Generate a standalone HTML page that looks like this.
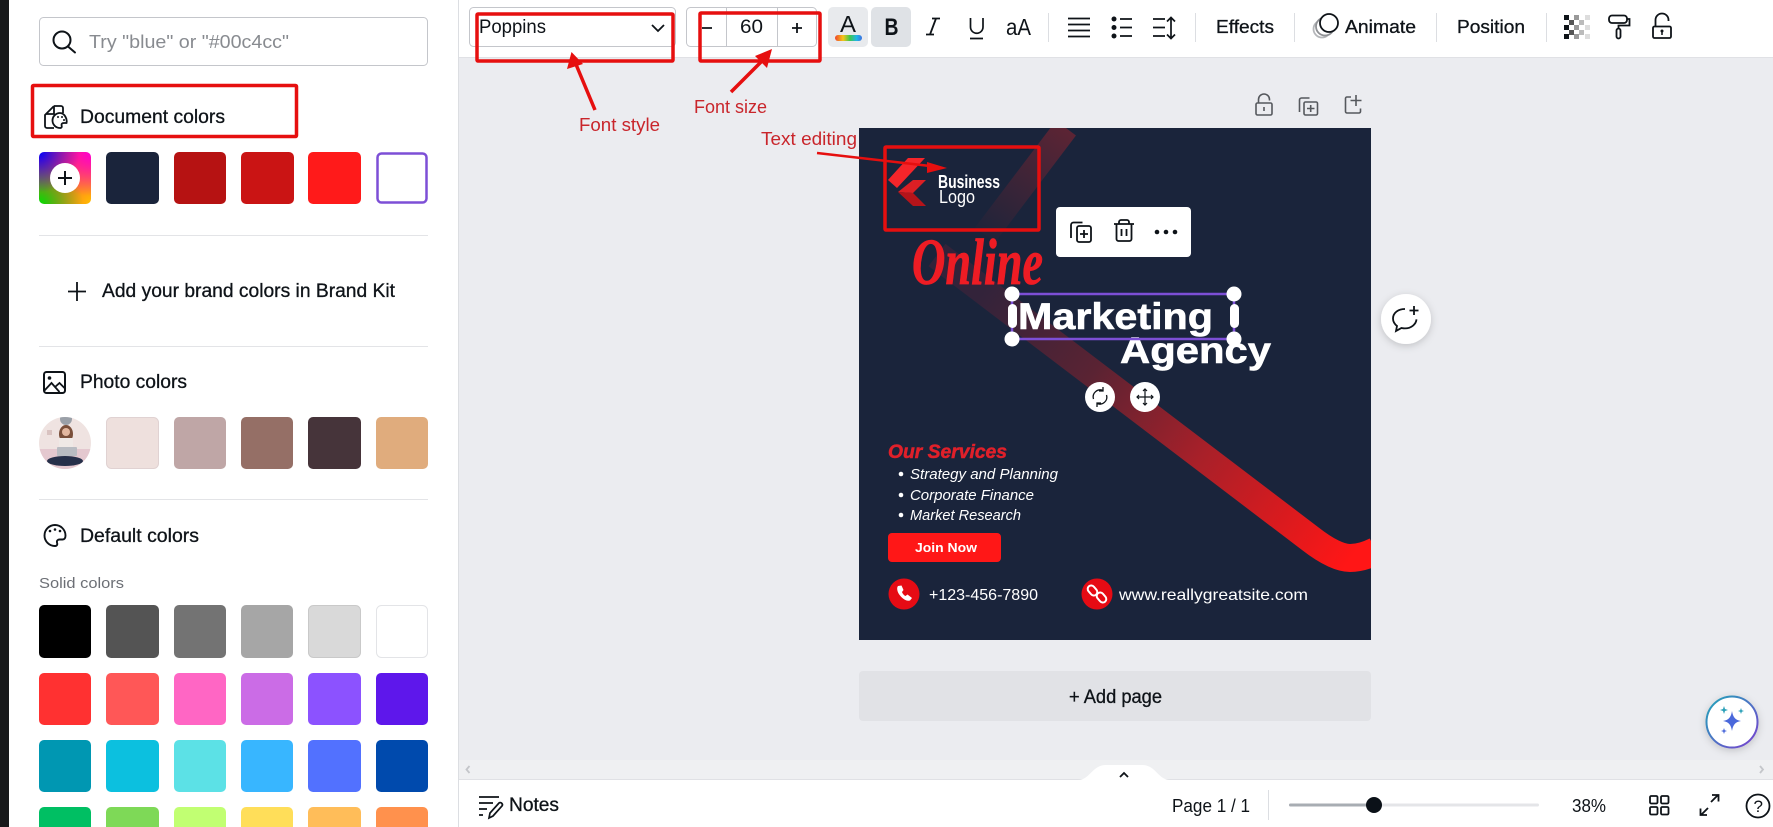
<!DOCTYPE html>
<html lang="en"><head><meta charset="utf-8"><title>Color panel editor</title>
<style>
html,body{margin:0;padding:0;width:1773px;height:827px;overflow:hidden;background:#fff}
svg{display:block;position:absolute;left:0;top:0}
text{font-family:"Liberation Sans",sans-serif;fill:#0e1318}
.m{stroke:#0e1318;stroke-width:.3px}
#rb{position:absolute;left:39px;top:152px;width:52px;height:52px;border-radius:5px;background:radial-gradient(circle at 0 0,#0000ff 0,transparent 55%),radial-gradient(circle at 100% 0,#ff00d0 0,transparent 60%),radial-gradient(circle at 0 100%,#00e000 0,transparent 60%),radial-gradient(circle at 100% 100%,#ffc000 0,transparent 65%),#ff4040}
#rb i{position:absolute;left:11px;top:11px;width:30px;height:30px;border-radius:50%;background:#fff}
#rb b{position:absolute;background:#0e1318}
</style></head><body>
<svg width="1773" height="827" viewBox="0 0 1773 827" xmlns="http://www.w3.org/2000/svg">
<defs>
<linearGradient id="band" gradientUnits="userSpaceOnUse" x1="985" y1="290" x2="1350" y2="560"><stop offset="0" stop-color="#33233a"/><stop offset=".3" stop-color="#5a2333"/><stop offset=".6" stop-color="#a82029"/><stop offset="1" stop-color="#ff1616"/></linearGradient>
<linearGradient id="band2" gradientUnits="userSpaceOnUse" x1="1066" y1="128" x2="985" y2="235"><stop offset="0" stop-color="#5c2434"/><stop offset="1" stop-color="#1f243a"/></linearGradient>
<linearGradient id="rain" x1="0" x2="1"><stop offset="0" stop-color="#f0442c"/><stop offset=".3" stop-color="#f5c518"/><stop offset=".55" stop-color="#3fc74c"/><stop offset=".8" stop-color="#1fb6e8"/><stop offset="1" stop-color="#3c6fe0"/></linearGradient>
<linearGradient id="ring" x1="0" y1="0" x2="1" y2="1"><stop offset="0" stop-color="#1fa6b8"/><stop offset="1" stop-color="#7a3fd0"/></linearGradient>
<clipPath id="des"><rect x="859" y="128" width="512" height="512"/></clipPath>
<clipPath id="ph"><circle cx="65" cy="443" r="26"/></clipPath>
<filter id="sh" x="-40%" y="-40%" width="180%" height="180%"><feDropShadow dx="0" dy="2" stdDeviation="4" flood-color="#000" flood-opacity=".18"/></filter>
</defs>

<!-- base -->
<rect x="0" y="0" width="1773" height="827" fill="#ebecf0"/>
<rect x="0" y="0" width="9" height="827" fill="#18191b"/>
<rect x="9" y="0" width="449" height="827" fill="#fff"/>
<rect x="458" y="0" width="1" height="827" fill="#dcdee2"/>
<rect x="459" y="0" width="1314" height="57" fill="#fff"/>
<rect x="459" y="57" width="1314" height="1" fill="#e0e1e5"/>

<!-- search -->
<rect x="39.500" y="17.500" width="388" height="48" rx="4" fill="#fff" stroke="#c4c6cb"/>
<circle cx="62" cy="40" r="8.500" fill="none" stroke="#0e1318" stroke-width="2"/><path d="M68 46.500L75 52.500" stroke="#0e1318" stroke-width="2" stroke-linecap="round"/>
<text x="89" y="48" font-size="18.500" textLength="200" lengthAdjust="spacingAndGlyphs" style="fill:#888b90">Try "blue" or "#00c4cc"</text>

<!-- document colors -->
<path d="M54 106h7a2 2 0 0 1 2 2v5M54 106l-9 9v11a2 2 0 0 0 2 2h7M54 106v8h-8" fill="none" stroke="#0e1318" stroke-width="1.800"/>
<path d="M60 113a7.500 7.500 0 1 0 0 15c2 0 2-1.500 1.500-3 0-1.500 1-2 2.500-2h2.500c1-4-2-10-6.500-10z" fill="#fff" stroke="#0e1318" stroke-width="1.800"/><circle cx="58" cy="117" r="1" fill="#0e1318"/><circle cx="62" cy="117" r="1" fill="#0e1318"/><circle cx="64" cy="120" r="1" fill="#0e1318"/>
<text class="m" x="80" y="123" font-size="19" textLength="145" lengthAdjust="spacingAndGlyphs">Document colors</text>
<rect x="106" y="152" width="53" height="52" rx="5" fill="#1a243b"/>
<rect x="174" y="152" width="52" height="52" rx="5" fill="#b61212"/>
<rect x="241" y="152" width="53" height="52" rx="5" fill="#ca1414"/>
<rect x="308" y="152" width="53" height="52" rx="5" fill="#ff1a1a"/>
<rect x="377.500" y="153.500" width="49" height="49" rx="4" fill="#fff" stroke="#7d4fd6" stroke-width="2.500"/>
<rect x="39" y="235" width="389" height="1" fill="#e3e4e7"/>

<path d="M77 282v19M68 291.500h18" stroke="#0e1318" stroke-width="1.800"/>
<text class="m" x="102" y="297" font-size="19" textLength="293" lengthAdjust="spacingAndGlyphs">Add your brand colors in Brand Kit</text>
<rect x="39" y="346" width="389" height="1" fill="#e3e4e7"/>

<!-- photo colors -->
<rect x="44" y="372" width="21" height="21" rx="2.500" fill="none" stroke="#0e1318" stroke-width="2"/><circle cx="49.500" cy="378" r="1.800" fill="#0e1318"/><path d="M44 391l7.500-8 8 9M55 387l4.500-4 6 6" fill="none" stroke="#0e1318" stroke-width="1.800"/>
<text class="m" x="80" y="388" font-size="19" textLength="107" lengthAdjust="spacingAndGlyphs">Photo colors</text>
<g clip-path="url(#ph)"><rect x="39" y="417" width="52" height="52" fill="#efe3e1"/><rect x="39" y="449" width="52" height="20" fill="#e4c8cf"/><circle cx="66" cy="419" r="6" fill="#9aa0a8"/><ellipse cx="66" cy="434" rx="7" ry="9" fill="#7a4f3a"/><circle cx="66" cy="432" r="4" fill="#e3b79f"/><rect x="59" y="438" width="14" height="9" fill="#efe9e6"/><rect x="57" y="447" width="20" height="9" rx="1" fill="#b9bcc2"/><ellipse cx="65" cy="461" rx="18" ry="5" fill="#26304a"/><rect x="47" y="430" width="5" height="5" fill="#d9c3c1"/></g>
<rect x="106.500" y="417.500" width="52" height="51" rx="5" fill="#eee0dd" stroke="#e0d2d2"/>
<rect x="174" y="417" width="52" height="52" rx="5" fill="#bfa6a6"/>
<rect x="241" y="417" width="52" height="52" rx="5" fill="#956f66"/>
<rect x="308" y="417" width="53" height="52" rx="5" fill="#46343a"/>
<rect x="376" y="417" width="52" height="52" rx="5" fill="#e0ac7d"/>
<rect x="39" y="499" width="389" height="1" fill="#e3e4e7"/>

<!-- default colors -->
<path d="M55 525a10.500 10.500 0 1 0 0 21c2.500 0 2.500-2 2-3.500-.5-2 1-3 2.500-3h3c2 0 3-1.500 3-4 0-6-5-10.500-10.500-10.500z" fill="none" stroke="#0e1318" stroke-width="1.900"/><circle cx="50" cy="531" r="1.300" fill="#0e1318"/><circle cx="55" cy="529.500" r="1.300" fill="#0e1318"/><circle cx="60" cy="531" r="1.300" fill="#0e1318"/>
<text class="m" x="80" y="542" font-size="19" textLength="119" lengthAdjust="spacingAndGlyphs">Default colors</text>
<text x="39" y="588" font-size="15" textLength="85" lengthAdjust="spacingAndGlyphs" style="fill:#6c6f75">Solid colors</text>

<!-- solid swatches -->
<g>
<rect x="39" y="605" width="52" height="53" rx="5" fill="#000"/><rect x="106" y="605" width="53" height="53" rx="5" fill="#545454"/><rect x="174" y="605" width="52" height="53" rx="5" fill="#737373"/><rect x="241" y="605" width="52" height="53" rx="5" fill="#a6a6a6"/><rect x="308.500" y="605.500" width="52" height="52" rx="5" fill="#d9d9d9" stroke="#c9c9c9"/><rect x="376.500" y="605.500" width="51" height="52" rx="5" fill="#fff" stroke="#e3e4e7"/>
<rect x="39" y="673" width="52" height="52" rx="5" fill="#ff3131"/><rect x="106" y="673" width="53" height="52" rx="5" fill="#ff5757"/><rect x="174" y="673" width="52" height="52" rx="5" fill="#ff66c4"/><rect x="241" y="673" width="52" height="52" rx="5" fill="#cb6ce6"/><rect x="308" y="673" width="53" height="52" rx="5" fill="#8c52ff"/><rect x="376" y="673" width="52" height="52" rx="5" fill="#5e17eb"/>
<rect x="39" y="740" width="52" height="52" rx="5" fill="#0097b2"/><rect x="106" y="740" width="53" height="52" rx="5" fill="#0cc0df"/><rect x="174" y="740" width="52" height="52" rx="5" fill="#5ce1e6"/><rect x="241" y="740" width="52" height="52" rx="5" fill="#38b6ff"/><rect x="308" y="740" width="53" height="52" rx="5" fill="#5271ff"/><rect x="376" y="740" width="52" height="52" rx="5" fill="#004aad"/>
<rect x="39" y="807" width="52" height="52" rx="5" fill="#00bf63"/><rect x="106" y="807" width="53" height="52" rx="5" fill="#7ed957"/><rect x="174" y="807" width="52" height="52" rx="5" fill="#c1ff72"/><rect x="241" y="807" width="52" height="52" rx="5" fill="#ffde59"/><rect x="308" y="807" width="53" height="52" rx="5" fill="#ffbd59"/><rect x="376" y="807" width="52" height="52" rx="5" fill="#ff914d"/>
</g>
<rect x="32.500" y="85.500" width="264" height="51" rx="1" fill="none" stroke="#e60f0f" stroke-width="3.500"/>

<!-- toolbar -->
<rect x="469.500" y="7.500" width="206" height="39" rx="4" fill="#fff" stroke="#c4c6cb"/>
<text x="479" y="33" font-size="19" textLength="67" lengthAdjust="spacingAndGlyphs">Poppins</text>
<path d="M652 25l6 6 6-6" fill="none" stroke="#0e1318" stroke-width="1.800"/>
<rect x="686.500" y="7.500" width="130" height="39" rx="4" fill="#fff" stroke="#c4c6cb"/>
<path d="M726.500 8v38M777.500 8v38" stroke="#c4c6cb"/>
<path d="M702 28h10M792 28h10M797 23v10" stroke="#0e1318" stroke-width="1.800"/>
<text x="740" y="33" font-size="19" textLength="23" lengthAdjust="spacingAndGlyphs">60</text>

<rect x="828" y="7" width="40" height="40" rx="5" fill="#e8eaed"/>
<rect x="871" y="7" width="40" height="40" rx="5" fill="#dfe2e6"/>
<text x="840" y="32" font-size="23" textLength="16" lengthAdjust="spacingAndGlyphs">A</text>
<rect x="835" y="35" width="27" height="6" rx="3" fill="url(#rain)"/>
<text x="884.500" y="35" font-size="24" font-weight="bold" textLength="14" lengthAdjust="spacingAndGlyphs">B</text>
<path d="M932 18.500h8M926 34.500h8M936 18.500l-6 16" fill="none" stroke="#0e1318" stroke-width="1.800"/>
<path d="M970.500 18v9a6 6 0 0 0 12.500 0V18M970 38.500h13" fill="none" stroke="#0e1318" stroke-width="1.700"/>
<text x="1006" y="35" font-size="23" textLength="25" lengthAdjust="spacingAndGlyphs">aA</text>
<rect x="1048" y="13" width="1" height="29" fill="#dcdee2"/>
<path d="M1068 18.500h22M1068 24.500h22M1068 30.500h22M1068 36.500h22" stroke="#0e1318" stroke-width="1.800"/>
<circle cx="1114" cy="19" r="2.500" fill="#0e1318"/><circle cx="1114" cy="27.500" r="2.500" fill="#0e1318"/><circle cx="1114" cy="36" r="2.500" fill="#0e1318"/>
<path d="M1120 19h12M1120 27.500h12M1120 36h12" stroke="#0e1318" stroke-width="1.800"/>
<path d="M1153 19h12M1153 27.500h12M1153 36h12" stroke="#0e1318" stroke-width="1.800"/>
<path d="M1171 18v20M1167 21.500l4-4 4 4M1167 34.500l4 4 4-4" fill="none" stroke="#0e1318" stroke-width="1.700"/>
<rect x="1195" y="13" width="1" height="29" fill="#dcdee2"/>
<text class="m" x="1216" y="33" font-size="18.500" textLength="58" lengthAdjust="spacingAndGlyphs">Effects</text>
<rect x="1294" y="13" width="1" height="29" fill="#dcdee2"/>
<circle cx="1322" cy="29" r="8.500" fill="#fff" stroke="#b5b7ba" stroke-width="1.800"/><circle cx="1325" cy="26.500" r="9" fill="#fff" stroke="#8f9195" stroke-width="1.800"/><circle cx="1329" cy="23" r="9" fill="#fff" stroke="#0e1318" stroke-width="1.800"/>
<text class="m" x="1345" y="33" font-size="18.500" textLength="71" lengthAdjust="spacingAndGlyphs">Animate</text>
<rect x="1436" y="13" width="1" height="29" fill="#dcdee2"/>
<text class="m" x="1457" y="33" font-size="18.500" textLength="68" lengthAdjust="spacingAndGlyphs">Position</text>
<rect x="1546" y="13" width="1" height="29" fill="#dcdee2"/>
<!-- transparency -->
<g>
<rect x="1564" y="15" width="5" height="5" fill="#0e1318"/><rect x="1564" y="25" width="5" height="5" fill="#0e1318"/><rect x="1564" y="34" width="5" height="5" fill="#0e1318"/>
<rect x="1569" y="20" width="5" height="5" fill="#555"/><rect x="1569" y="30" width="5" height="5" fill="#555"/>
<rect x="1574" y="15" width="5" height="5" fill="#999"/><rect x="1574" y="25" width="5" height="5" fill="#999"/><rect x="1574" y="34" width="5" height="5" fill="#999"/>
<rect x="1579" y="20" width="5" height="5" fill="#bbb"/><rect x="1579" y="30" width="5" height="5" fill="#bbb"/>
<rect x="1585" y="15" width="5" height="5" fill="#ddd"/><rect x="1585" y="25" width="5" height="5" fill="#ddd"/><rect x="1585" y="34" width="5" height="5" fill="#ddd"/>
</g>
<rect x="1609" y="15.500" width="18" height="7.500" rx="3" fill="none" stroke="#0e1318" stroke-width="1.800"/>
<path d="M1627 19h2.500v6.500h-11v3" fill="none" stroke="#0e1318" stroke-width="1.800"/><rect x="1616.500" y="28.500" width="4" height="10" rx="2" fill="none" stroke="#0e1318" stroke-width="1.800"/>
<rect x="1653" y="26.500" width="18" height="11.500" rx="1.500" fill="none" stroke="#0e1318" stroke-width="1.800"/><path d="M1655.500 26v-6a6.500 6.500 0 0 1 13 0v1" fill="none" stroke="#0e1318" stroke-width="1.800"/><circle cx="1662" cy="31" r="1.500" fill="#0e1318"/><path d="M1662 31v4" stroke="#0e1318" stroke-width="1.500"/>

<!-- canvas icons -->
<g fill="none" stroke="#55585d" stroke-width="1.600">
<rect x="1256" y="103" width="16" height="12" rx="1.500"/><path d="M1258.500 103v-3.500a5.500 5.500 0 0 1 11 0v1"/><path d="M1264 107v4"/>
<path d="M1299.500 112v-12a2 2 0 0 1 2-2h8"/><rect x="1304" y="102" width="13.500" height="13" rx="1.500"/><path d="M1310.700 105v7M1307 108.500h7.500"/>
<path d="M1351 97h-4a1.500 1.500 0 0 0-1.500 1.500v13a1.500 1.500 0 0 0 1.500 1.500h12a1.500 1.500 0 0 0 1.500-1.500v-3"/><path d="M1356 95v11M1350.500 100.500h11"/>
</g>

<!-- design -->
<rect x="859" y="128" width="512" height="512" fill="#1a243b"/>
<g clip-path="url(#des)">
<path d="M1066 128L985 235" stroke="url(#band2)" stroke-width="25" fill="none"/>
<path d="M937 255L1310 538.500Q1335 558 1350 558Q1362 558 1376 551" stroke="url(#band)" stroke-width="28" fill="none"/>
</g>
<!-- logo -->
<polygon points="908,158 925,158 897,188 888,180" fill="#f5252a"/>
<polygon points="913,180 926,180 913,193 898,192" fill="#dc1f24"/>
<polygon points="898,192 913,193 926,206 913,206" fill="#b5141a"/>
<text x="938" y="188" font-size="18" font-weight="bold" textLength="62" lengthAdjust="spacingAndGlyphs" style="fill:#fff">Business</text>
<text x="939" y="203" font-size="18" textLength="36" lengthAdjust="spacingAndGlyphs" style="fill:#fff">Logo</text>
<text x="912" y="284" font-size="66" font-weight="bold" font-style="italic" textLength="131" lengthAdjust="spacingAndGlyphs" style="font-family:'Liberation Serif',serif;fill:#ee1c24;stroke:#ee1c24;stroke-width:.8px">Online</text>

<!-- selected text -->
<text x="1018" y="329" font-size="37" font-weight="bold" textLength="195" lengthAdjust="spacingAndGlyphs" style="fill:#fff;stroke:#fff;stroke-width:.6px">Marketing</text>
<text x="1120" y="363" font-size="37" font-weight="bold" textLength="151" lengthAdjust="spacingAndGlyphs" style="fill:#fff;stroke:#fff;stroke-width:.6px">Agency</text>
<rect x="1012" y="294" width="222" height="45" fill="none" stroke="#7d4fd6" stroke-width="2.500"/>
<g fill="#fff"><circle cx="1012" cy="294" r="7.500"/><circle cx="1234" cy="294" r="7.500"/><circle cx="1012" cy="339" r="7.500"/><circle cx="1234" cy="339" r="7.500"/><rect x="1008" y="304" width="9" height="24" rx="4.500"/><rect x="1230" y="304" width="9" height="24" rx="4.500"/></g>

<!-- floating toolbar -->
<rect x="1056" y="207" width="135" height="50" rx="4" fill="#fff"/>
<g fill="none" stroke="#0e1318" stroke-width="1.800">
<path d="M1071 238v-13a2.500 2.500 0 0 1 2.500-2.500h9"/><rect x="1077" y="226" width="14" height="16" rx="2"/><path d="M1084 230v8M1080 234h8"/>
<path d="M1114 224h20M1119 224v-2a2 2 0 0 1 2-2h6a2 2 0 0 1 2 2v2M1116.500 224v15a2 2 0 0 0 2 2h11a2 2 0 0 0 2-2v-15M1121.500 229v7M1126.500 229v7"/>
</g>
<circle cx="1157" cy="232" r="2.300" fill="#0e1318"/><circle cx="1166" cy="232" r="2.300" fill="#0e1318"/><circle cx="1175" cy="232" r="2.300" fill="#0e1318"/>

<!-- rotate / move -->
<circle cx="1100" cy="397" r="15" fill="#fff"/><circle cx="1145" cy="397" r="15" fill="#fff"/>
<path d="M1093.500 399a7 7 0 0 1 9.500-8.500M1106.500 395a7 7 0 0 1-9.500 8.500M1103 387v4h-4M1097 407v-4h4" fill="none" stroke="#0e1318" stroke-width="1.300"/>
<path d="M1145 389v16M1137 397h16M1143 391l2-2 2 2M1143 403l2 2 2-2M1139 395l-2 2 2 2M1151 395l2 2-2 2" fill="none" stroke="#0e1318" stroke-width="1.200"/>

<!-- services -->
<text x="888" y="458" font-size="19" font-weight="bold" font-style="italic" textLength="119" lengthAdjust="spacingAndGlyphs" style="fill:#e0202a;stroke:#e0202a;stroke-width:.5px">Our Services</text>
<circle cx="901" cy="474" r="2.300" fill="#fff"/><circle cx="901" cy="495" r="2.300" fill="#fff"/><circle cx="901" cy="515" r="2.300" fill="#fff"/>
<text x="910" y="479" font-size="14.500" font-style="italic" textLength="148" lengthAdjust="spacingAndGlyphs" style="fill:#fff">Strategy and Planning</text>
<text x="910" y="500" font-size="14.500" font-style="italic" textLength="124" lengthAdjust="spacingAndGlyphs" style="fill:#fff">Corporate Finance</text>
<text x="910" y="520" font-size="14.500" font-style="italic" textLength="111" lengthAdjust="spacingAndGlyphs" style="fill:#fff">Market Research</text>
<rect x="888" y="533" width="113" height="29" rx="4" fill="#ff1717"/>
<text x="915" y="552" font-size="13" font-weight="bold" textLength="62" lengthAdjust="spacingAndGlyphs" style="fill:#fff">Join Now</text>
<circle cx="904" cy="594" r="15.500" fill="#e60b14"/>
<path d="M898 586c-1.500 1.500-1 6 2 9.500s6.500 6 10 5l2-2.500-4.500-3.500-2 1.500c-1.500-.5-3-2.500-3.500-4l1.500-2-2-4.500z" fill="#fff"/>
<text x="929" y="600" font-size="16" textLength="109" lengthAdjust="spacingAndGlyphs" style="fill:#fff">+123-456-7890</text>
<circle cx="1097" cy="594" r="15.500" fill="#e60b14"/>
<g fill="none" stroke="#fff" stroke-width="2"><rect x="1089" y="585" width="7" height="11" rx="3.500" transform="rotate(-40 1092.500 590.500)"/><rect x="1098" y="592" width="7" height="11" rx="3.500" transform="rotate(-40 1101.500 597.500)"/></g>
<text x="1119" y="600" font-size="16" textLength="189" lengthAdjust="spacingAndGlyphs" style="fill:#fff">www.reallygreatsite.com</text>

<!-- add page -->
<rect x="859" y="671" width="512" height="50" rx="4" fill="#e1e2e6"/>
<text class="m" x="1069" y="703" font-size="19" textLength="93" lengthAdjust="spacingAndGlyphs">+ Add page</text>

<!-- comment -->
<circle cx="1406" cy="319" r="25" fill="#fff" filter="url(#sh)"/>
<path d="M1405 309c-7 0-12 4-12 9.500 0 3 1.500 5.500 4 7.500l-1 5 5.500-3c1 .2 2.500.4 3.500.4 6 0 11-4 11.500-9" fill="none" stroke="#0e1318" stroke-width="1.800"/><path d="M1414 306v9M1409.500 310.500h9" stroke="#0e1318" stroke-width="1.800"/>

<!-- magic -->
<circle cx="1732" cy="722" r="25.500" fill="#fff" stroke="url(#ring)" stroke-width="2" filter="url(#sh)"/>
<path d="M1732 711c1 6 3 9 9 10-6 1-8 4-9 10-1-6-3-9-9-10 6-1 8-4 9-10z" fill="#4a68db"/>
<path d="M1724 706l1 3 3 1-3 1-1 3-1-3-3-1 3-1zM1741 708l.8 2.200 2.200.8-2.200.8-.8 2.200-.8-2.200-2.200-.8 2.200-.8z" fill="#2aa0b8"/><path d="M1724 728l.8 2.200 2.200.8-2.200.8-.8 2.200-.8-2.200-2.200-.8 2.200-.8z" fill="#4a68db"/>

<!-- bottom -->
<rect x="459" y="760" width="1314" height="19" fill="#eff0f2"/>
<rect x="459" y="779" width="1314" height="48" fill="#fff"/>
<rect x="459" y="779" width="1314" height="1" fill="#e0e1e5"/>
<path d="M1078 780c12 0 14-15 28-15h36c14 0 16 15 28 15z" fill="#fff"/>
<path d="M1120 777l4-4 4 4" fill="none" stroke="#0e1318" stroke-width="1.800"/>
<path d="M469.500 766l-3 3.500 3 3.500" fill="none" stroke="#c4c6ca" stroke-width="1.800"/>
<path d="M1760 766l3 3.500-3 3.500" fill="none" stroke="#c4c6ca" stroke-width="1.800"/>
<path d="M479 797h20M479 803h14M479 809h8M479 815h4" stroke="#0e1318" stroke-width="1.700"/><path d="M489 818l1-5 9-10c1.500-1.500 4.500 1 3 3l-9 10z" fill="none" stroke="#0e1318" stroke-width="1.700"/>
<text class="m" x="509" y="811" font-size="19" textLength="50" lengthAdjust="spacingAndGlyphs">Notes</text>
<text x="1172" y="812" font-size="18.500" textLength="78" lengthAdjust="spacingAndGlyphs">Page 1 / 1</text>
<rect x="1268" y="790" width="1" height="30" fill="#dcdee2"/>
<rect x="1289" y="803.500" width="250" height="3" rx="1.500" fill="#e4e5e8"/>
<rect x="1289" y="803.500" width="85" height="3" rx="1.500" fill="#a8adb3"/>
<circle cx="1374" cy="805" r="8" fill="#0b1118"/>
<text x="1572" y="812" font-size="18.500" textLength="34" lengthAdjust="spacingAndGlyphs">38%</text>
<g fill="none" stroke="#0e1318" stroke-width="1.800"><rect x="1650" y="796" width="7.500" height="7.500" rx="1.200"/><rect x="1661" y="796" width="7.500" height="7.500" rx="1.200"/><rect x="1650" y="807" width="7.500" height="7.500" rx="1.200"/><rect x="1661" y="807" width="7.500" height="7.500" rx="1.200"/>
<path d="M1711 802l7-7M1712 795h6.500v6.500M1708 808l-7 7M1707 815h-6.500v-6.500"/>
<circle cx="1758" cy="806" r="11.500"/></g>
<text x="1753.500" y="812" font-size="17">?</text>

<!-- annotations -->
<g fill="none" stroke="#e60f0f" stroke-width="3.500"><rect x="477" y="14" width="196" height="47" rx="1"/><rect x="700" y="13" width="120" height="48" rx="1"/><rect x="885" y="147" width="154" height="83" rx="1"/></g>
<path d="M595 110L575 62" stroke="#e60f0f" stroke-width="3.500"/><polygon points="571.500,52 567,69 583,64" fill="#e60f0f"/>
<path d="M731 92L763 60" stroke="#e60f0f" stroke-width="3.500"/><polygon points="772,49 755,56 767,68" fill="#e60f0f"/>
<path d="M817 153L930 166" stroke="#e60f0f" stroke-width="2.500"/><polygon points="947,168 927,162 927,173" fill="#e60f0f"/>
<text x="579" y="131" font-size="18" textLength="81" lengthAdjust="spacingAndGlyphs" style="fill:#c9252b">Font style</text>
<text x="694" y="113" font-size="18" textLength="73" lengthAdjust="spacingAndGlyphs" style="fill:#c9252b">Font size</text>
<text x="761" y="145" font-size="18" textLength="96" lengthAdjust="spacingAndGlyphs" style="fill:#c9252b">Text editing</text>
</svg>
<div id="rb"><i></i><b style="left:19px;top:25px;width:14px;height:2px"></b><b style="left:25px;top:19px;width:2px;height:14px"></b></div>
</body></html>
